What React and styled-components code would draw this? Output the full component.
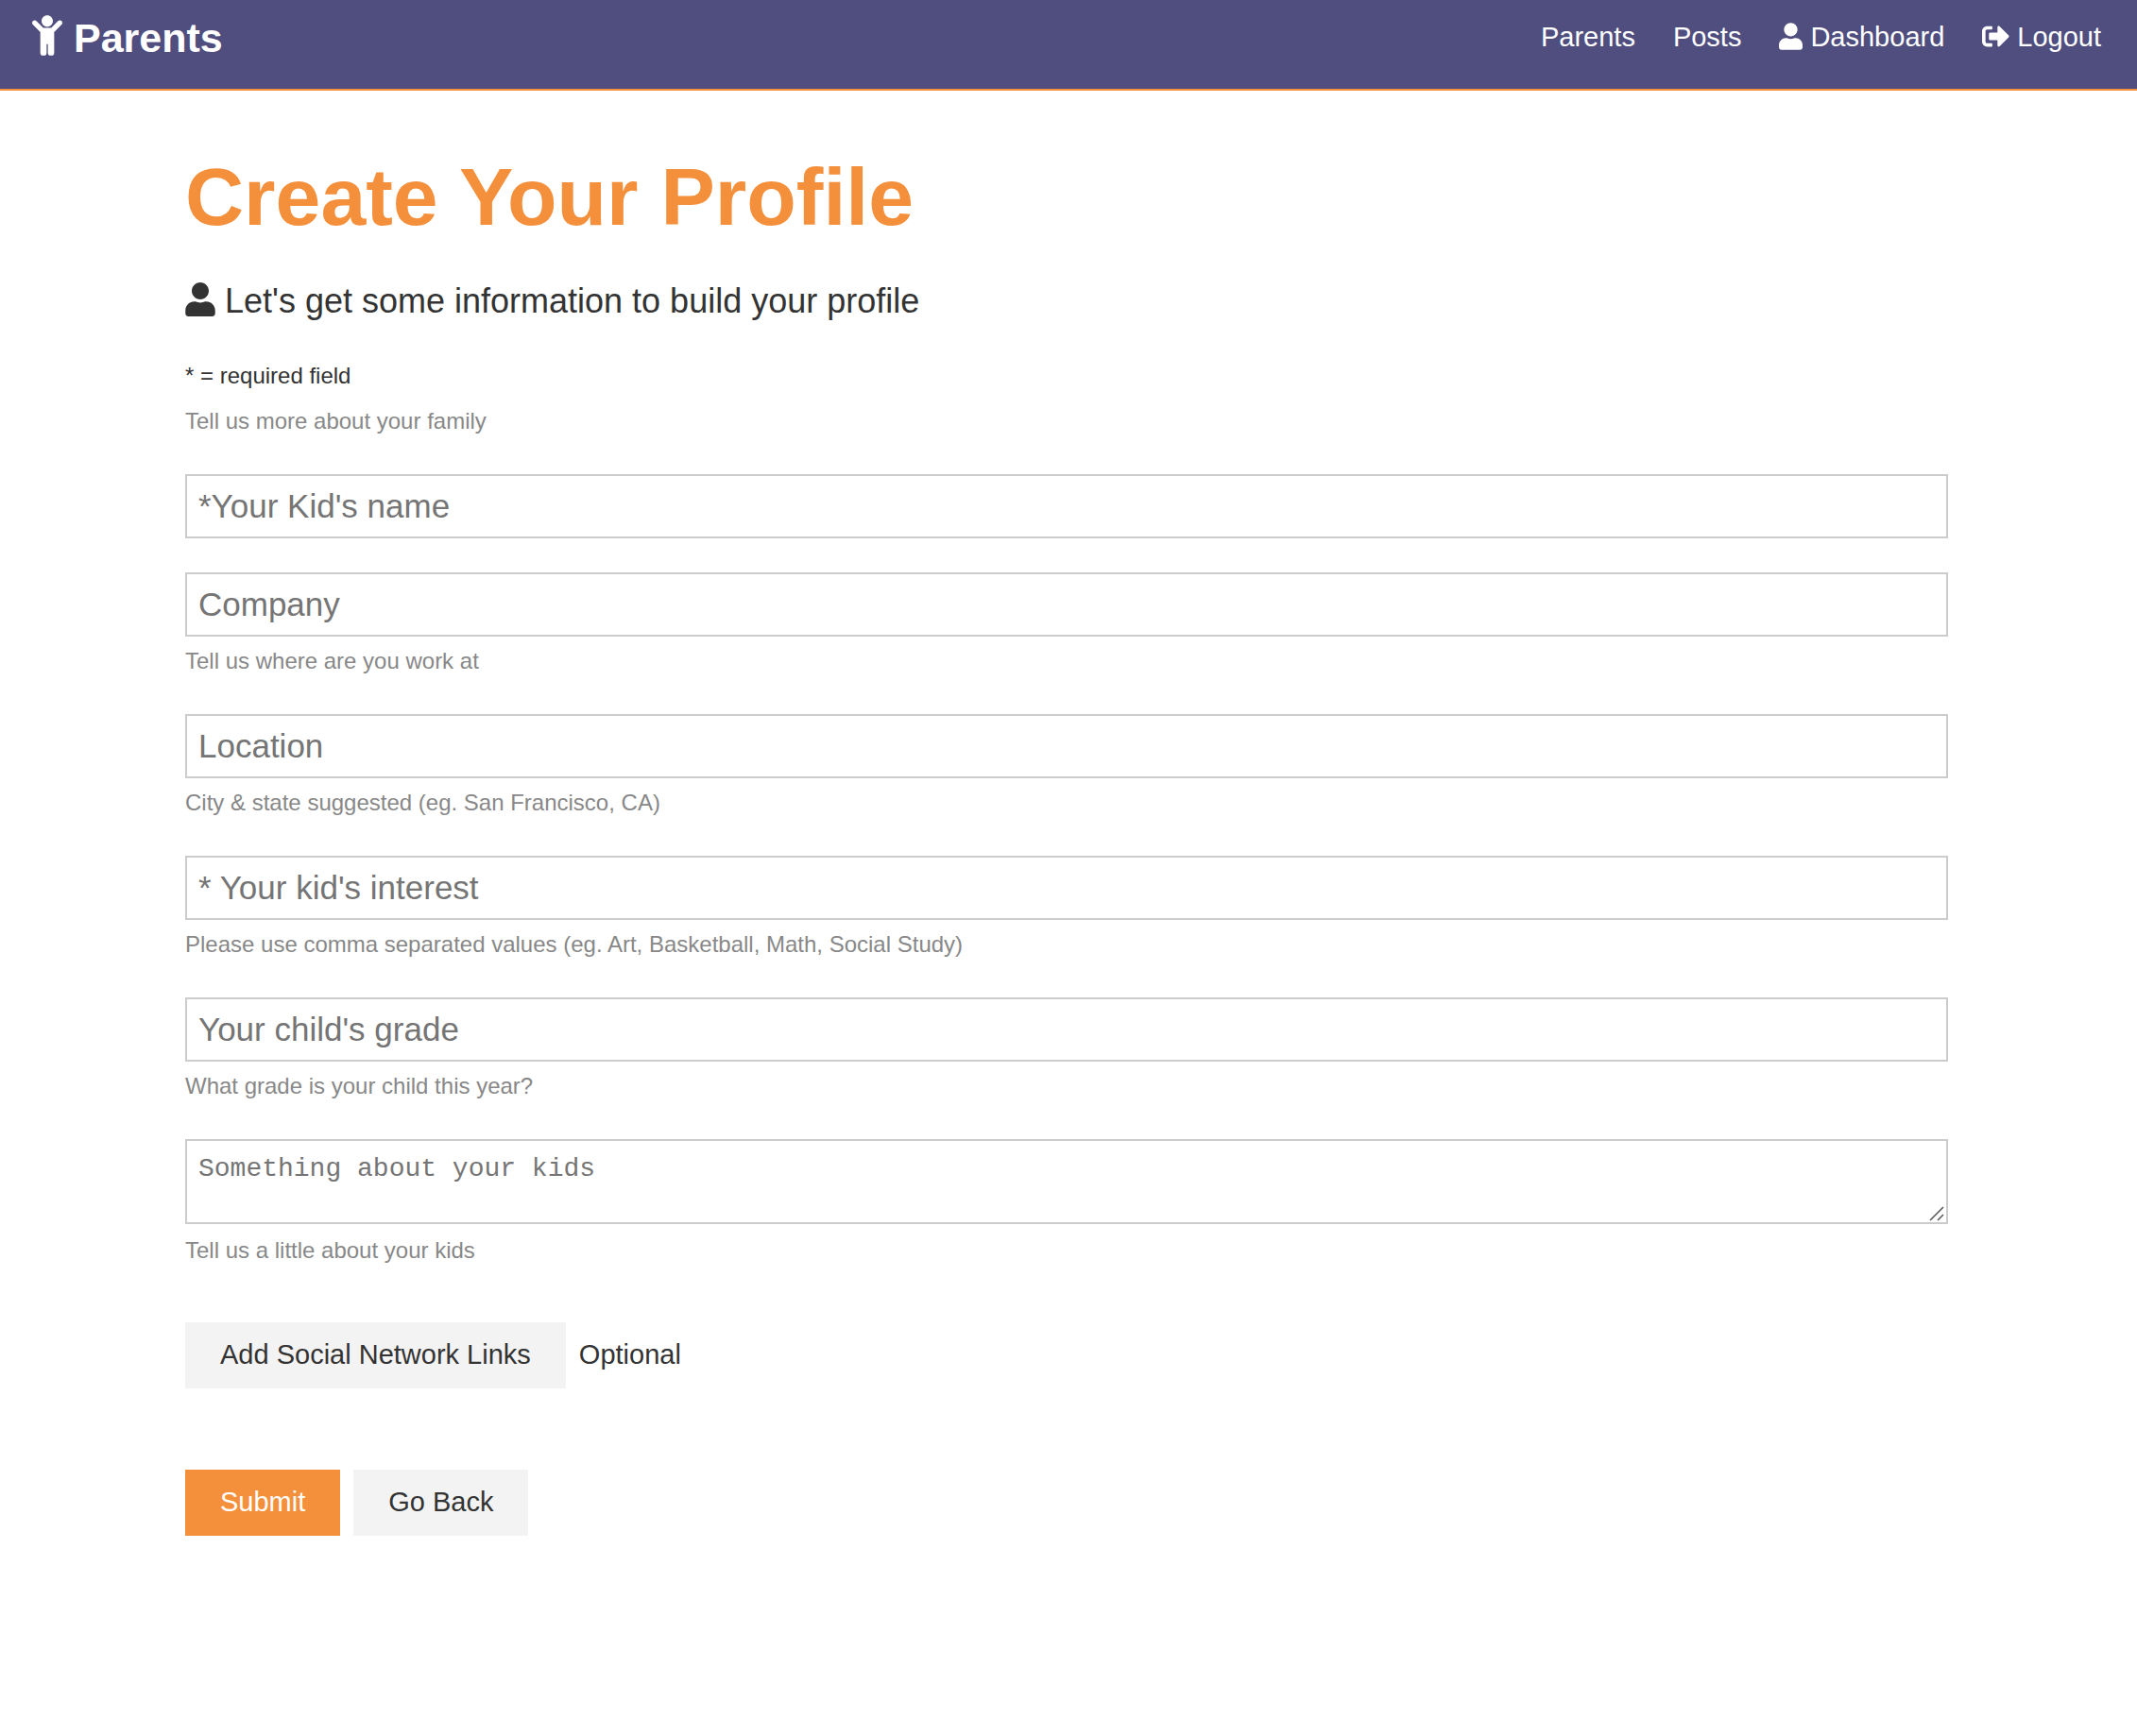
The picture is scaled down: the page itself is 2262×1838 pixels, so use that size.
import React from "react";
import styled, { createGlobalStyle, css } from "styled-components";
import { FaUser, FaChild, FaSignOutAlt } from "react-icons/fa";

const color = {
  primary: "#f4903c",
  nav: "#4f4e7f",
  dark: "#333",
  light: "#f3f3f3",
  muted: "#888",
  line: "#ccc",
};

const GlobalStyle = createGlobalStyle`
  *, *::before, *::after { box-sizing: border-box; margin: 0; padding: 0; }
  body {
    margin: 0;
    background: #fff;
    color: ${color.dark};
    font-family: "Liberation Sans", Arial, sans-serif;
    font-size: 29px;
    line-height: 46px;
  }
  a { text-decoration: none; color: inherit; }
`;

const Navbar = styled.nav`
  display: flex;
  justify-content: space-between;
  align-items: flex-start;
  flex-wrap: wrap;
  min-height: 96px;
  padding: 16px 38px 0 34px;
  background: ${color.nav};
  border-bottom: 2px solid ${color.primary};
  color: #fff;
`;

const iconText = css`
  svg {
    width: ${(p) => p.$icon}px;
    vertical-align: -4px;
    margin-right: ${(p) => p.$gap || 8}px;
  }
`;

const Brand = styled.a`
  font-size: 43px;
  font-weight: bold;
  line-height: 46px;
  white-space: nowrap;
  ${iconText}
`;

const NavLinks = styled.ul`
  display: flex;
  flex-wrap: wrap;
  gap: 0 40px;
  list-style: none;
`;

const NavLink = styled.a`
  white-space: nowrap;
  ${iconText}
`;

const Page = styled.div`
  padding-right: 4px;
`;

const Container = styled.main`
  max-width: 1866px;
  margin: 0 auto;
  padding: 60px 0;
`;

const Title = styled.h1`
  margin-bottom: 30px;
  color: ${color.primary};
  font-size: 86px;
  line-height: 104px;
`;

const Lead = styled.p`
  margin-bottom: 30px;
  font-size: 36px;
  line-height: 58px;
  ${iconText}
`;

const Small = styled.small`
  display: block;
  font-size: 24px;
  line-height: 40px;
`;

const Hint = styled(Small)`
  margin-top: 6px;
  color: ${color.muted};
`;

const Form = styled.form`
  margin-top: 8px;
`;

const Field = styled.div`
  margin: 36px 0;
`;

const control = css`
  display: block;
  width: 100%;
  padding: 12px;
  border: 2px solid ${color.line};
  border-radius: 0;
  background: #fff;
  color: ${color.dark};
  outline: none;
  &::placeholder { color: #757575; opacity: 1; }
`;

const Input = styled.input`
  ${control}
  height: 68px;
  font: 35px "Liberation Sans", Arial, sans-serif;
`;

const TextArea = styled.textarea`
  ${control}
  height: 90px;
  font: 28px/36px "Liberation Mono", "Courier New", monospace;
  resize: vertical;
  &::-webkit-resizer { background: transparent; }
`;

const TextAreaFrame = styled.div`
  position: relative;
  margin-bottom: 8px;
`;

const Grip = styled.svg`
  position: absolute;
  right: 4px;
  bottom: 3px;
  width: 16px;
  height: 16px;
  pointer-events: none;
`;

const ButtonRow = styled.div`
  display: flex;
  flex-wrap: wrap;
  align-items: center;
  gap: 14px;
  margin-top: ${(p) => p.$top}px;
`;

const Button = styled.button`
  height: 70px;
  padding: 0 37px 2px;
  border: none;
  background: ${(p) => (p.$primary ? color.primary : color.light)};
  color: ${(p) => (p.$primary ? "#fff" : color.dark)};
  font: inherit;
  cursor: pointer;
`;

const Optional = styled.span`
  padding-bottom: 2px;
`;

const fields = [
  { name: "kidname", placeholder: "*Your Kid's name" },
  { name: "company", placeholder: "Company", hint: "Tell us where are you work at" },
  { name: "location", placeholder: "Location", hint: "City & state suggested (eg. San Francisco, CA)" },
  {
    name: "interest",
    placeholder: "* Your kid's interest",
    hint: "Please use comma separated values (eg. Art, Basketball, Math, Social Study)",
  },
  { name: "grade", placeholder: "Your child's grade", hint: "What grade is your child this year?" },
];

export default function App() {
  return (
    <>
      <GlobalStyle />
      <Navbar>
        <Brand href="#" $icon={32} $gap={12}>
          <FaChild size={43} />
          Parents
        </Brand>
        <NavLinks>
          <li><NavLink href="#">Parents</NavLink></li>
          <li><NavLink href="#">Posts</NavLink></li>
          <li><NavLink href="#" $icon={25}><FaUser size={29} />Dashboard</NavLink></li>
          <li><NavLink href="#" $icon={29}><FaSignOutAlt size={29} />Logout</NavLink></li>
        </NavLinks>
      </Navbar>
      <Page>
        <Container>
          <Title>Create Your Profile</Title>
          <Lead $icon={32} $gap={10}>
            <FaUser size={36} />
            Let's get some information to build your profile
          </Lead>
          <Small>* = required field</Small>
          <Form onSubmit={(e) => e.preventDefault()}>
            <Hint>Tell us more about your family</Hint>
            {fields.map((f) => (
              <Field key={f.name}>
                <Input
                  type="text"
                  name={f.name}
                  placeholder={f.placeholder}
                  aria-label={f.placeholder}
                  aria-describedby={f.hint ? `${f.name}-hint` : undefined}
                />
                {f.hint && <Hint id={`${f.name}-hint`}>{f.hint}</Hint>}
              </Field>
            ))}
            <Field>
              <TextAreaFrame>
                <TextArea
                  name="bio"
                  placeholder="Something about your kids"
                  aria-label="Something about your kids"
                  aria-describedby="bio-hint"
                />
                <Grip viewBox="0 0 16 16" stroke="#555" strokeWidth="1.5" aria-hidden="true">
                  <path d="M1 15L15 1M9 15l6-6" />
                </Grip>
              </TextAreaFrame>
              <Hint id="bio-hint">Tell us a little about your kids</Hint>
            </Field>
            <ButtonRow $top={56}>
              <Button type="button">Add Social Network Links</Button>
              <Optional>Optional</Optional>
            </ButtonRow>
            <ButtonRow $top={86}>
              <Button type="submit" $primary>Submit</Button>
              <Button type="button">Go Back</Button>
            </ButtonRow>
          </Form>
        </Container>
      </Page>
    </>
  );
}
